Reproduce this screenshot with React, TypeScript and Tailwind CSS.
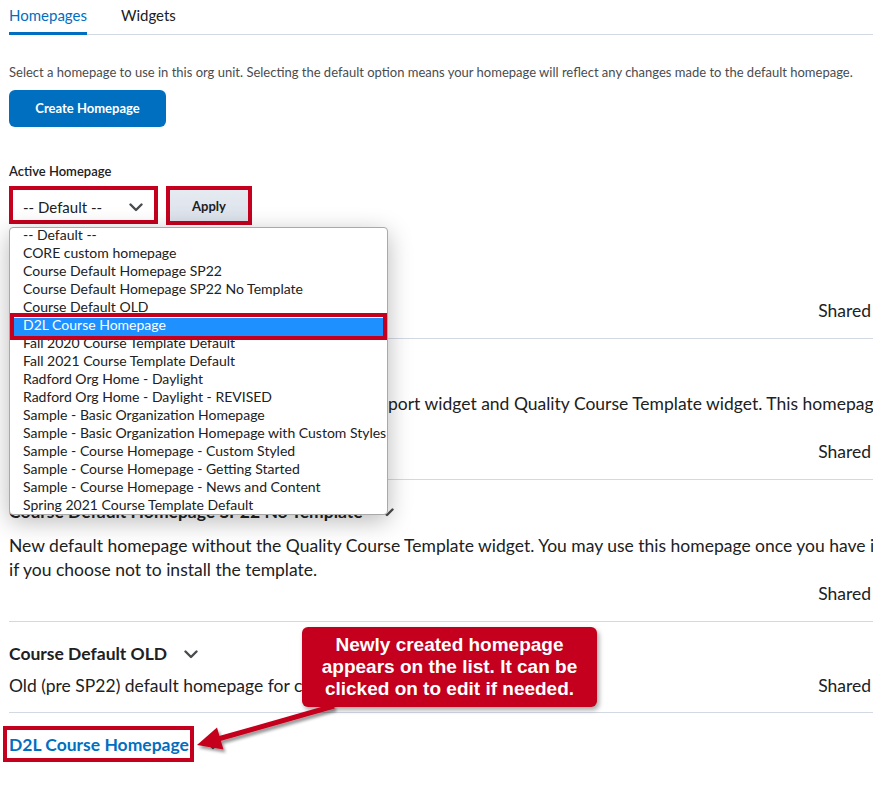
import React from "react";

const items = [
  "-- Default --",
  "CORE custom homepage",
  "Course Default Homepage SP22",
  "Course Default Homepage SP22 No Template",
  "Course Default OLD",
  "D2L Course Homepage",
  "Fall 2020 Course Template Default",
  "Fall 2021 Course Template Default",
  "Radford Org Home - Daylight",
  "Radford Org Home - Daylight - REVISED",
  "Sample - Basic Organization Homepage",
  "Sample - Basic Organization Homepage with Custom Styles",
  "Sample - Course Homepage - Custom Styled",
  "Sample - Course Homepage - Getting Started",
  "Sample - Course Homepage - News and Content",
  "Spring 2021 Course Template Default",
];

function Chevron({ className = "" }: { className?: string }) {
  return (
    <svg viewBox="0 0 14 9" className={className} fill="none">
      <path d="M1.5 1.5 L7 7 L12.5 1.5" stroke="#494c4e" strokeWidth="2.4" strokeLinecap="round" strokeLinejoin="round" />
    </svg>
  );
}

type RowProps = {
  title: React.ReactNode;
  lines: React.ReactNode[];
  inline?: boolean;
  first?: boolean;
  gap?: string;
  pb?: string;
};

function Row({ title, lines, inline, first, gap = "mt-[8px]", pb = "pb-[15px]" }: RowProps) {
  return (
    <div className={`pt-[20px] ${pb} pr-[2px] ${first ? "" : "border-t border-[#d3d9e3]"}`}>
      <div className="flex h-[24px] items-center gap-[17px] text-[17.5px] font-bold leading-[24px] text-[#202122]">
        {title}
        <Chevron className="h-[9px] w-[14px]" />
      </div>
      <div className={`${gap} text-[17.5px] leading-[24px] text-[#202122]`}>
        {inline ? (
          <div className="flex justify-between whitespace-nowrap">
            <span>{lines[0]}</span>
            <span>Shared</span>
          </div>
        ) : (
          <>
            {lines.map((l, i) => (
              <div key={i} className="whitespace-nowrap">
                {l}
              </div>
            ))}
            <div className="flex justify-end">Shared</div>
          </>
        )}
      </div>
    </div>
  );
}

export default function App() {
  return (
    <div className="relative h-[789px] w-[873px] overflow-hidden bg-white font-['Lato',sans-serif] text-[#202122]">
      <div className="pl-[9px]">
        {/* Tabs */}
        <div className="flex h-[35px] gap-[34px] border-b border-[#d3d9e3]">
          <div className="-mb-px h-[35px] border-b-[3px] border-[#006fbf] pt-[5px] text-[15px] leading-[20px] text-[#006fbf]">
            Homepages
          </div>
          <div className="pt-[5px] text-[15px] leading-[20px] text-[#202122]">Widgets</div>
        </div>

        <div className="mt-[28px] whitespace-nowrap text-[13px] leading-[18px] text-[#494c4e]">
          Select a homepage to use in this org unit. Selecting the default option means your homepage will reflect any changes made to the default homepage.
        </div>

        <button className="mt-[9px] flex h-[37px] w-[157px] items-center justify-center rounded-[6px] bg-[#006fbf] text-[13px] font-bold text-white">
          Create Homepage
        </button>

        <div className="mt-[35px] text-[13px] font-semibold leading-[18px] text-[#202122]">Active Homepage</div>

        <div className="mt-[6px] flex gap-[8px]">
          <div className="flex h-[38px] w-[149px] items-center justify-between border-4 border-[#c4001e] bg-white pl-[10px] pr-[11px] pt-[4px]">
            <span className="text-[15px] text-[#202122]">-- Default --</span>
            <Chevron className="h-[9px] w-[14px]" />
          </div>
          <div className="h-[39px] w-[86px] border-4 border-[#c4001e]">
            <div className="flex h-full w-full items-center justify-center bg-gradient-to-b from-[#e6ebf2] to-[#dbe1ea] pt-[2px] text-[13px] font-bold text-[#202122]">
              Apply
            </div>
          </div>
        </div>

        {/* List */}
        <div className="mt-[22px]">
          <Row first title="CORE custom homepage" lines={["Custom homepage created for CORE."]} inline />
          <Row
            title="Course Default Homepage SP22"
            gap="mt-[9px]"
            lines={[
              <>
                <span className="inline-block w-[379px] overflow-hidden whitespace-nowrap text-right align-top">
                  New default homepage that includes the Course Sup
                </span>
                <span>port widget and Quality Course Template widget. This homepage is recommended</span>
              </>,
              "for courses in SP22.",
            ]}
          />
          <Row
            title="Course Default Homepage SP22 No Template"
            gap="mt-[10px]"
            lines={[
              "New default homepage without the Quality Course Template widget. You may use this homepage once you have installed the template",
              "if you choose not to install the template.",
            ]}
          />
          <Row title="Course Default OLD" lines={["Old (pre SP22) default homepage for courses."]} inline pb="pb-[14px]" />
          <div className="border-t border-[#d3d9e3] pt-[20px]">
            <div className="flex h-[24px] items-center gap-[17px] text-[17.5px] font-bold leading-[24px]">
              <span className="relative text-[#006fbf]">
                D2L Course Homepage
                <span className="absolute -bottom-[5px] -left-[6px] -right-[5px] -top-[7px] border-4 border-[#c4001e]" />
              </span>
              <Chevron className="h-[9px] w-[14px]" />
            </div>
          </div>
        </div>
      </div>

      {/* Dropdown popup */}
      <div className="absolute left-[9px] top-[227px] h-[288px] w-[379px] rounded-[4px] border border-[#a9a9a9] bg-white shadow-[0_6px_24px_rgba(0,0,0,0.28)]">
        {items.map((it, i) => (
          <div
            key={i}
            className={`h-[18px] whitespace-nowrap pl-[13px] text-[14px] leading-[18px] ${
              i === 5 ? "bg-[#1e90ff] text-white" : "text-[#202122]"
            }`}
          >
            <span className="relative -top-[2px]">{it}</span>
          </div>
        ))}
        <div className="absolute left-0 top-[85px] h-[27px] w-[377px] border-4 border-[#c4001e]" />
      </div>

      {/* Callout */}
      <div className="absolute left-[302px] top-[627px] flex h-[80px] w-[295px] flex-col items-center justify-center rounded-[6px] bg-[#c4001e] font-['Liberation_Sans',Arial,sans-serif] text-[19px] font-bold leading-[22px] text-white shadow-[2px_3px_5px_rgba(0,0,0,0.35)]">
        <div>Newly created homepage</div>
        <div>appears on the list. It can be</div>
        <div>clicked on to edit if needed.</div>
      </div>

      {/* Arrow */}
      <svg className="pointer-events-none absolute left-0 top-0" width="873" height="789" viewBox="0 0 873 789">
        <defs>
          <filter id="sh" x="-20%" y="-20%" width="140%" height="140%">
            <feDropShadow dx="2" dy="3" stdDeviation="1.5" floodColor="#000" floodOpacity="0.4" />
          </filter>
        </defs>
        <g filter="url(#sh)">
          <line x1="218" y1="739" x2="334" y2="706" stroke="#c4001e" strokeWidth="5" />
          <polygon points="197,745 217,727.5 223.5,749.5" fill="#c4001e" />
        </g>
      </svg>
    </div>
  );
}
